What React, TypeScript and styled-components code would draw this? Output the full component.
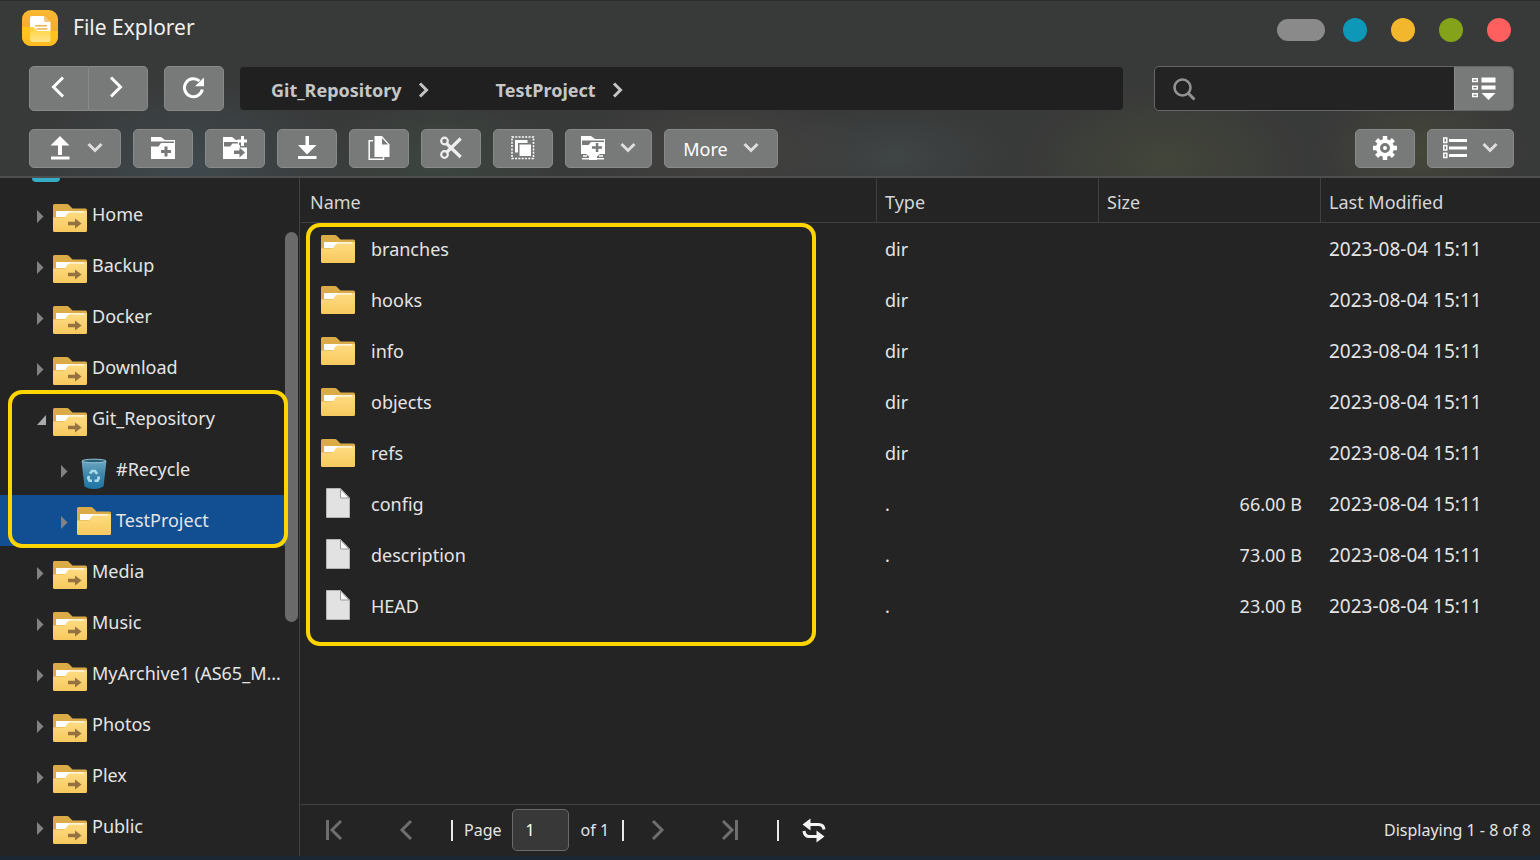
import React from "react";
import styled, { createGlobalStyle } from "styled-components";

const GlobalStyle = createGlobalStyle`
  *, *::before, *::after { box-sizing: border-box; }
  html, body, #root { height: 100%; }
  body {
    margin: 0;
    background: #1b2833;
    color: #e4e4e4;
    font-family: "Noto Sans", "Open Sans", sans-serif;
    font-size: 18px;
    line-height: 24px;
  }
  button, input { font: inherit; color: inherit; }
  button { cursor: pointer; }
`;

const GREY = "#787979";
const GOLD = "#ffd500";

/* ---------- window frame ---------- */

const Page = styled.div`
  height: 100%;
  padding-bottom: 4px;
`;

const Window = styled.div`
  display: flex;
  flex-direction: column;
  height: 100%;
  overflow: hidden;
  background: #242424;
  border-radius: 0 0 4px 4px;
`;

const Header = styled.header`
  display: flex;
  flex-direction: column;
  border-top: 1px solid #2b2c2c;
  border-bottom: 2px solid #4d4e4e;
  padding: 0 26px 8px 29px;
  background:
    radial-gradient(ellipse 170px 90px at 190px 165px, rgba(66, 80, 86, 0.7), transparent),
    radial-gradient(ellipse 130px 70px at 440px 160px, rgba(62, 76, 66, 0.7), transparent),
    radial-gradient(ellipse 150px 60px at 720px 150px, rgba(76, 72, 70, 0.7), transparent),
    radial-gradient(ellipse 120px 55px at 895px 155px, rgba(68, 76, 76, 0.6), transparent),
    radial-gradient(ellipse 150px 80px at 1165px 160px, rgba(70, 74, 58, 0.75), transparent),
    radial-gradient(ellipse 110px 70px at 1420px 150px, rgba(72, 74, 58, 0.8), transparent),
    #383939;
`;

const TitleBar = styled.div`
  display: flex;
  align-items: center;
  height: 54px;
  margin: 0 3px 11px -7px;
`;

const AppTitle = styled.h1`
  flex: 1;
  margin: 0 0 0 15px;
  padding-bottom: 3px;
  font-size: 21px;
  line-height: 28px;
  font-weight: 400;
  color: #f0f0f0;
`;

const WindowButtons = styled.div`
  display: flex;
  align-items: center;
  gap: 24px;
`;

const WindowButton = styled.button<{ $color: string }>`
  width: 24px;
  height: 24px;
  margin-top: 3px;
  padding: 0;
  border: 0;
  border-radius: 50%;
  background: ${(p) => p.$color};
`;

const PillButton = styled(WindowButton)`
  width: 48px;
  height: 22px;
  margin-right: -6px;
  border-radius: 11px;
`;

/* ---------- bars ---------- */

const AddressBar = styled.div`
  display: flex;
  align-items: center;
  height: 45px;
  margin-bottom: 18px;
`;

const Toolbar = styled.div`
  display: flex;
  gap: 12px;
`;

const Spacer = styled.div`
  flex: 1;
`;

const BarButton = styled.button<{ $width?: number }>`
  display: flex;
  align-items: center;
  justify-content: center;
  gap: 15px;
  flex: none;
  width: ${(p) => p.$width ?? 60}px;
  height: 39px;
  padding: 0 0 1px;
  border: 1px solid #888989;
  border-radius: 5px;
  background: ${GREY};
  color: #fff;
`;

const ButtonText = styled.span`
  padding-top: 2px;
`;

const TallButton = styled(BarButton)`
  height: 45px;
`;

const NavGroup = styled.div`
  display: flex;
  margin-right: 16px;

  ${TallButton}:first-child { border-radius: 5px 0 0 5px; }
  ${TallButton}:last-child { border-radius: 0 5px 5px 0; border-left: 0; width: 59px; }
`;

const Breadcrumb = styled.nav`
  display: flex;
  align-items: center;
  flex: 1;
  gap: 64px;
  height: 43px;
  margin: 0 31px 0 16px;
  padding: 2px 31px 0;
  border-radius: 4px;
  background: #202020;
`;

const Crumb = styled.a`
  display: flex;
  align-items: center;
  gap: 14px;
  color: #c6c6c6;
  font-weight: 700;
  text-decoration: none;
`;

const SearchBox = styled.form`
  display: flex;
  align-items: center;
  flex: none;
  width: 360px;
  height: 45px;
  padding-left: 17px;
  border: 1px solid #656666;
  border-radius: 5px;
  background: #232323;
  overflow: hidden;
`;

const SearchInput = styled.input`
  flex: 1;
  min-width: 0;
  height: 43px;
  padding: 0 12px;
  border: 0;
  outline: 0;
  background: transparent;
`;

const SearchButton = styled(TallButton)`
  width: 59px;
  border-width: 0 0 0 1px;
  border-radius: 0;
`;

/* ---------- body ---------- */

const Body = styled.div`
  display: flex;
  flex: 1;
  min-height: 0;
`;

const Sidebar = styled.aside`
  display: flex;
  flex: none;
  width: 300px;
  border-right: 1px solid #434343;
`;

const Tree = styled.ul`
  width: 285px;
  margin: 0;
  padding: 0;
  list-style: none;
  white-space: nowrap;
`;

const TreeTop = styled.li`
  height: 11px;
  padding-left: 32px;

  &::before {
    content: "";
    display: block;
    width: 28px;
    height: 4px;
    border-radius: 0 0 10px 10px;
    background: #35adc5;
  }
`;

const SubTree = styled.ul`
  margin: 0;
  padding: 0;
  list-style: none;
`;

const Branch = styled.li<{ $marked?: boolean }>`
  position: relative;
  ${(p) =>
    p.$marked &&
    `&::after {
      content: "";
      position: absolute;
      inset: -3px -3px -2px 8px;
      border: 4px solid ${GOLD};
      border-radius: 14px;
      pointer-events: none;
    }`}
`;

const TreeItem = styled.a<{ $depth: number; $selected?: boolean }>`
  display: flex;
  align-items: center;
  height: 51px;
  padding-left: ${(p) => 34 + p.$depth * 24}px;
  background: ${(p) => (p.$selected ? "#124e92" : "transparent")};
  color: inherit;
  text-decoration: none;

  span { padding: 0 0 2px 5px; }
  svg { flex: none; }
`;

const ScrollTrack = styled.div`
  width: 13px;
  padding-top: 54px;
`;

const ScrollThumb = styled.div`
  width: 13px;
  height: 390px;
  border-radius: 7px;
  background: #6a6a6a;
`;

const Main = styled.main`
  display: flex;
  flex-direction: column;
  flex: 1;
  min-width: 0;
  padding-left: 1px;
`;

const FileArea = styled.div`
  position: relative;
  flex: 1;
  min-height: 0;
`;

const Marker = styled.div`
  position: absolute;
  top: 45px;
  left: 5px;
  width: 510px;
  height: 423px;
  border: 4px solid ${GOLD};
  border-radius: 14px;
  pointer-events: none;
`;

const FileTable = styled.table`
  width: 100%;
  table-layout: fixed;
  border-collapse: separate;
  border-spacing: 0;

  tbody::before {
    content: "";
    display: block;
    height: 1px;
  }
`;

const HeadCell = styled.th<{ $width?: number }>`
  width: ${(p) => (p.$width ? `${p.$width}px` : "auto")};
  height: 45px;
  padding: 3px 0 0 9px;
  border-bottom: 1px solid #404040;
  text-align: left;
  font-weight: 400;
  color: #d6d6d6;

  & + & { padding-left: 8px; border-left: 1px solid #404040; }
`;

const Cell = styled.td<{ $right?: boolean; $large?: boolean }>`
  height: 51px;
  padding: ${(p) => (p.$right ? "0 18px 2px 0" : "0 0 2px 9px")};
  font-size: ${(p) => (p.$large ? 19 : 18)}px;
  text-align: ${(p) => (p.$right ? "right" : "left")};
`;

const FileName = styled.div`
  display: flex;
  align-items: center;
  gap: 16px;
  padding-left: 11px;
`;

/* ---------- footer ---------- */

const Footer = styled.footer`
  display: flex;
  align-items: center;
  height: 52px;
  padding: 0 9px 1px 17px;
  border-top: 1px solid #434343;
  font-size: 16px;
`;

const PagerButton = styled.button<{ $gap?: number }>`
  display: flex;
  margin-right: ${(p) => p.$gap ?? 0}px;
  padding: 0;
  border: 0;
  background: transparent;
`;

const Divider = styled.span<{ $gap: number }>`
  width: 2px;
  height: 21px;
  margin-right: ${(p) => p.$gap}px;
  background: #e8e8e8;
`;

const PageLabel = styled.label`
  display: flex;
  align-items: center;
  gap: 10px;
`;

const PageInput = styled.input`
  width: 57px;
  height: 42px;
  padding: 0 13px;
  border: 1px solid #6a6a6a;
  border-radius: 5px;
  background: #383838;
  color: #fff;
`;

const PageCount = styled.span`
  margin: 0 13px 0 12px;
`;

/* ---------- icons ---------- */

const Icon = ({ size = 24, children }: { size?: number; children: React.ReactNode }) => (
  <svg width={size} height={size} viewBox={`0 0 ${size} ${size}`} fill="none" aria-hidden="true">
    {children}
  </svg>
);

const Chevron = ({ d, color = "#fff", width = 3, size = 24 }: { d: string; color?: string; width?: number; size?: number }) => (
  <Icon size={size}>
    <path d={d} stroke={color} strokeWidth={width} />
  </Icon>
);

const DownChevron = () => <Chevron size={16} color="#dedede" d="M1.500 4 8 10.500 14.500 4" />;

const AppIcon = () => (
  <Icon size={36}>
    <defs>
      <linearGradient id="appTop" x1="0" y1="0" x2="0" y2="1">
        <stop offset="0" stopColor="#f9b832" />
        <stop offset="1" stopColor="#eea12d" />
      </linearGradient>
      <linearGradient id="appBottom" x1="0" y1="0" x2="0" y2="1">
        <stop offset="0" stopColor="#ffc61c" />
        <stop offset="1" stopColor="#fdbb22" />
      </linearGradient>
      <linearGradient id="appPocket" x1="0" y1="0" x2="0" y2="1">
        <stop offset="0" stopColor="#ffd035" />
        <stop offset="1" stopColor="#ffe68a" />
      </linearGradient>
    </defs>
    <rect width="36" height="36" rx="9" fill="url(#appTop)" />
    <path d="M0 17h11l4 4h21v6a9 9 0 0 1-9 9H9a9 9 0 0 1-9-9z" fill="url(#appBottom)" />
    <path d="M8 8a2 2 0 0 1 2-2h12l6.500 6v9.500H15l-4-4.500H8z" fill="#fff" />
    <path d="M22 6v4a2 2 0 0 0 2 2h4.500z" fill="#f3c272" />
    <path d="M13 15.700h12M14.500 19h11" stroke="#efb04a" strokeWidth="1.500" />
    <path d="M8 17h3l4 4h13.500v9a2 2 0 0 1-2 2H10a2 2 0 0 1-2-2z" fill="url(#appPocket)" />
  </Icon>
);

const RefreshIcon = () => (
  <Icon>
    <path d="M20.300 13.500A9 9 0 1 1 17.500 5" stroke="#fff" strokeWidth="3" />
    <path d="M22 1.500V10.300H13z" fill="#fff" />
  </Icon>
);

const SearchIcon = () => (
  <Icon>
    <circle cx="10.500" cy="10.500" r="8" stroke="#929292" strokeWidth="2.600" />
    <path d="M16.500 16.500 22.500 22.500" stroke="#929292" strokeWidth="3" />
  </Icon>
);

const FilterIcon = () => (
  <Icon>
    <path d="M.700 2.700h4.600v2.800H.700zM.700 10.200h4.600v2.800H.700zM.700 17.700h4.600v2.800H.700z" stroke="#fff" strokeWidth="1.400" />
    <path d="M9.500 1.500H23.500v5H9.500zM9.500 9.500H23.500v4H9.500zM9.500 17H23.500l-7 7z" fill="#fff" />
  </Icon>
);

const UploadIcon = () => (
  <Icon>
    <path d="M12 0 21.500 9.500H14V19h-4V9.500H2.500zM3 20.500h18.500v3H3z" fill="#fff" />
  </Icon>
);

const DownloadIcon = () => (
  <Icon>
    <path d="M10.500 0h3.500v9h7.500l-9.500 9.500L3 9h7.500zM3 20h18.500v3H3z" fill="#fff" />
  </Icon>
);

const NewFolderIcon = () => (
  <Icon>
    <path d="M0 1h10l4 3h10v19H0z" fill="#fff" />
    <path d="M0 5.500h23v1.500h-13l-2.500 3.500H0z" fill={GREY} />
    <path d="M13.500 10.500h3v3.500H20v3h-3.500v3.500h-3V17H10v-3h3.500z" fill={GREY} />
  </Icon>
);

const NewShareIcon = () => (
  <Icon>
    <path d="M0 1h9l4 3h3v5h1v2.500h7V23H0z" fill="#fff" />
    <path d="M1 6h14v1.500H9.500L7 10.500H1z" fill={GREY} />
    <path d="M18 0h3v3.500h3.500v3H21V10h-3V6.500h-3.500v-3H18z" fill="#fff" />
    <path d="M11 14.500h5.500V11.500l5.500 5-5.500 5v-3.500H11z" fill={GREY} />
  </Icon>
);

const CopyIcon = () => (
  <Icon>
    <path d="M6 4.700H2.200V23.200H16.500V21" stroke="#fff" strokeWidth="1.500" />
    <path d="M7.500 0H15l7.500 8.500V21h-15z" fill="#fff" />
    <path d="M15 2v6.500h6z" fill={GREY} />
  </Icon>
);

const CutIcon = () => (
  <Icon>
    <g stroke="#efefef" strokeWidth="2.200">
      <circle cx="5.500" cy="5" r="3.300" />
      <circle cx="5.500" cy="18.500" r="3.300" />
    </g>
    <path d="M7.500 7.500 21.700 21M7.500 16.500 21.700 2.500" stroke="#efefef" strokeWidth="3.200" />
  </Icon>
);

const SelectAllIcon = () => (
  <Icon>
    <rect x="1" y="1" width="21.500" height="21.500" stroke="#fff" strokeWidth="1.500" strokeDasharray="2 1.300" />
    <path d="M4 4h12.500v3H7v9.500H4z" fill="#fff" />
    <path d="M8.500 8.500h11.500v11.500H8.500z" fill="#fff" />
  </Icon>
);

const RemoteFolderIcon = () => (
  <Icon>
    <path d="M0 0h10l4 3h10v15H0z" fill="#fff" />
    <path d="M1 4.500h22V6H10L7.500 9H1z" fill={GREY} />
    <path d="M14.800 7h2.500v3.300H21v2.500h-3.700V16h-2.500v-3.200H11v-2.500h3.800z" fill={GREY} />
    <path d="M2 20h4M18 20H22M1 22.700h7.500M16 22.700h7" stroke="#fff" strokeWidth="1.500" />
    <path d="M4 17h16l-4 3.500V24H8v-3.500z" fill="#fff" />
  </Icon>
);

const GearIcon = () => (
  <Icon>
    <g stroke="#fff" strokeWidth="4.400">
      <path d="M12 0v5M12 19v5M0 12h5M19 12h5M3.600 3.600l3.600 3.600M16.800 16.800l3.600 3.600M3.600 20.400l3.600-3.600M16.800 7.200l3.600-3.600" />
    </g>
    <circle cx="12" cy="12" r="7" stroke="#fff" strokeWidth="4" />
    <circle cx="12" cy="12" r="2" fill="#fff" />
  </Icon>
);

const ListIcon = () => (
  <Icon>
    <path d="M.800 2h3v4.400h-3zM.800 9.600h3V14h-3zM.800 17.200h3v4.400h-3z" stroke="#fff" strokeWidth="1.500" />
    <path d="M6 4.500h18M6 12h18M6 19.500h18" stroke="#fff" strokeWidth="3" />
  </Icon>
);

const SyncIcon = () => (
  <Icon size={26}>
    <path d="M8 7.500h9.500q5 0 5.500 5M17 19.500H8.500q-5 0-5.500-5.500" stroke="#f4f4f4" strokeWidth="3" />
    <path d="M9.500 1.500v12L1.500 7.500zM15.500 13.500v12L23.500 19.500z" fill="#f4f4f4" />
  </Icon>
);

const Expander = ({ open }: { open?: boolean }) => (
  <svg width="19" height="16" viewBox="0 0 19 16" aria-hidden="true">
    {open ? <path d="M3 14h9V4z" fill="#a9abae" /> : <path d="M3 3v13l6.500-6.500z" fill="#828282" />}
  </svg>
);

const FolderIcon = ({ shared }: { shared?: boolean }) => (
  <svg width="34" height="40" viewBox="0 0 34 40" aria-hidden="true">
    <defs>
      <linearGradient id="folderFront" x1="0" y1="0" x2="0" y2="1">
        <stop offset="0" stopColor="#ffdc83" />
        <stop offset="1" stopColor="#f7c95e" />
      </linearGradient>
    </defs>
    <g transform={shared ? "translate(0 3)" : undefined}>
      <path d="M0 7.500Q0 6 1.500 6H14q1 0 2 1l3.500 3.500H32.500Q34 10.500 34 12v21H0z" fill="#dbab48" />
      <path d="M3 13h28v3H3z" fill="#fff3d6" />
      <path d="M3 13h14l-4 6H3z" fill="#fff" />
      <path d="M0 19.500h10.500q1.500 0 2.500-1.500l1.200-2q.800-1.200 2-1.200H31V13H34V32.500q0 1.500-1.500 1.500h-31Q0 34 0 32.500z" fill="url(#folderFront)" />
      {shared && <path d="M15 23.700h7V20.500l6.500 5-6.500 5v-3.200h-7z" fill="#957240" />}
    </g>
  </svg>
);

const FileIcon = () => (
  <svg width="34" height="40" viewBox="0 0 34 40" aria-hidden="true">
    <path d="M5.500 4.500H19.500L28.500 14V33.500h-23z" fill="#e2e2e2" stroke="#b4b4b4" />
    <path d="M19.500 5v9H28z" fill="#fafafa" stroke="#999" />
  </svg>
);

const RecycleIcon = () => (
  <svg width="34" height="40" viewBox="0 0 34 40" aria-hidden="true">
    <defs>
      <linearGradient id="bin" x1="0" y1="0" x2="0" y2="1">
        <stop offset="0" stopColor="#6ba5c0" />
        <stop offset="0.500" stopColor="#3f86ab" />
        <stop offset="1" stopColor="#1b75a6" />
      </linearGradient>
    </defs>
    <path d="M4.500 11 7.500 36.500q4 2.500 9.500 2.500t9.500-2.500L29.500 11z" fill="url(#bin)" />
    <ellipse cx="17" cy="11" rx="12" ry="1.800" fill="#2f5f77" stroke="#8fc3d6" strokeWidth="1" />
    <g transform="translate(16.500 26)" stroke="#a9dbea" strokeWidth="2.600" fill="none">
      <path d="M-3.500-2.500-1.500-5H1.500L3.700-2" />
      <path d="M4.600.500 5.300 2.200 4 4.800H1" />
      <path d="M-1.500 4.800H-4L-5.300 2.200-4.500 0" />
    </g>
  </svg>
);

/* ---------- data ---------- */

type Node = { name: string; kind?: "shared" | "bin" | "folder"; children?: Node[]; selected?: boolean };

const tree: Node[] = [
  { name: "Home" },
  { name: "Backup" },
  { name: "Docker" },
  { name: "Download" },
  {
    name: "Git_Repository",
    children: [
      { name: "#Recycle", kind: "bin" },
      { name: "TestProject", kind: "folder", selected: true },
    ],
  },
  { name: "Media" },
  { name: "Music" },
  { name: "MyArchive1 (AS65_M..." },
  { name: "Photos" },
  { name: "Plex" },
  { name: "Public" },
];

const files = [
  { name: "branches", type: "dir", size: "" },
  { name: "hooks", type: "dir", size: "" },
  { name: "info", type: "dir", size: "" },
  { name: "objects", type: "dir", size: "" },
  { name: "refs", type: "dir", size: "" },
  { name: "config", type: ".", size: "66.00 B" },
  { name: "description", type: ".", size: "73.00 B" },
  { name: "HEAD", type: ".", size: "23.00 B" },
];

const TreeNode = ({ node, depth = 0 }: { node: Node; depth?: number }) => (
  <Branch $marked={!!node.children}>
    <TreeItem href="#" $depth={depth} $selected={node.selected}>
      <Expander open={!!node.children} />
      {node.kind === "bin" ? <RecycleIcon /> : <FolderIcon shared={node.kind !== "folder"} />}
      <span>{node.name}</span>
    </TreeItem>
    {node.children && (
      <SubTree>
        {node.children.map((child) => (
          <TreeNode key={child.name} node={child} depth={depth + 1} />
        ))}
      </SubTree>
    )}
  </Branch>
);

export default function App() {
  return (
    <Page>
      <GlobalStyle />
      <Window>
        <Header>
          <TitleBar>
            <AppIcon />
            <AppTitle>File Explorer</AppTitle>
            <WindowButtons>
              <PillButton $color="#8a8a8a" aria-label="Help" />
              <WindowButton $color="#0c98b6" aria-label="Pin" />
              <WindowButton $color="#f3b72e" aria-label="Minimize" />
              <WindowButton $color="#84a31a" aria-label="Maximize" />
              <WindowButton $color="#ff5f5f" aria-label="Close" />
            </WindowButtons>
          </TitleBar>

          <AddressBar>
            <NavGroup>
              <TallButton aria-label="Back">
                <Chevron d="M16 1.500 6.500 11 16 20.500" />
              </TallButton>
              <TallButton aria-label="Forward">
                <Chevron d="M5 1.500 14.500 11 5 20.500" />
              </TallButton>
            </NavGroup>
            <TallButton aria-label="Refresh">
              <RefreshIcon />
            </TallButton>
            <Breadcrumb aria-label="Path">
              {["Git_Repository", "TestProject"].map((crumb) => (
                <Crumb key={crumb} href="#">
                  {crumb}
                  <Chevron size={16} color="#c4c4c4" d="M4 1.500 10.500 8 4 14.500" />
                </Crumb>
              ))}
            </Breadcrumb>
            <SearchBox role="search">
              <SearchIcon />
              <SearchInput type="text" aria-label="Search" />
              <SearchButton type="button" aria-label="Search options">
                <FilterIcon />
              </SearchButton>
            </SearchBox>
          </AddressBar>

          <Toolbar>
            <BarButton $width={92} aria-label="Upload">
              <UploadIcon />
              <DownChevron />
            </BarButton>
            <BarButton aria-label="New folder">
              <NewFolderIcon />
            </BarButton>
            <BarButton aria-label="New shared folder">
              <NewShareIcon />
            </BarButton>
            <BarButton aria-label="Download">
              <DownloadIcon />
            </BarButton>
            <BarButton aria-label="Copy">
              <CopyIcon />
            </BarButton>
            <BarButton aria-label="Cut">
              <CutIcon />
            </BarButton>
            <BarButton aria-label="Select all">
              <SelectAllIcon />
            </BarButton>
            <BarButton $width={87} aria-label="Remote folder">
              <RemoteFolderIcon />
              <DownChevron />
            </BarButton>
            <BarButton $width={114}>
              <ButtonText>More</ButtonText>
              <DownChevron />
            </BarButton>
            <Spacer />
            <BarButton aria-label="Settings">
              <GearIcon />
            </BarButton>
            <BarButton $width={87} aria-label="View">
              <ListIcon />
              <DownChevron />
            </BarButton>
          </Toolbar>
        </Header>

        <Body>
          <Sidebar>
            <Tree>
              <TreeTop />
              {tree.map((node) => (
                <TreeNode key={node.name} node={node} />
              ))}
            </Tree>
            <ScrollTrack>
              <ScrollThumb />
            </ScrollTrack>
          </Sidebar>

          <Main>
            <FileArea>
              <FileTable>
                <thead>
                  <tr>
                    <HeadCell>Name</HeadCell>
                    <HeadCell $width={222}>Type</HeadCell>
                    <HeadCell $width={222}>Size</HeadCell>
                    <HeadCell $width={220}>Last Modified</HeadCell>
                  </tr>
                </thead>
                <tbody>
                  {files.map((file) => (
                    <tr key={file.name}>
                      <Cell>
                        <FileName>
                          {file.type === "dir" ? <FolderIcon /> : <FileIcon />}
                          {file.name}
                        </FileName>
                      </Cell>
                      <Cell>{file.type}</Cell>
                      <Cell $right>{file.size}</Cell>
                      <Cell $large>2023-08-04 15:11</Cell>
                    </tr>
                  ))}
                </tbody>
              </FileTable>
              <Marker />
            </FileArea>

            <Footer>
              <PagerButton $gap={49} aria-label="First page">
                <Chevron color="#6e6e6e" d="M9.500 2v20M23 3 14 12 23 21" />
              </PagerButton>
              <PagerButton $gap={36} aria-label="Previous page">
                <Chevron color="#6e6e6e" d="M20 3 11 12 20 21" />
              </PagerButton>
              <Divider $gap={11} />
              <PageLabel>
                Page
                <PageInput type="text" defaultValue="1" />
              </PageLabel>
              <PageCount>of 1</PageCount>
              <Divider $gap={22} />
              <PagerButton $gap={49} aria-label="Next page">
                <Chevron color="#6e6e6e" d="M7 3 16 12 7 21" />
              </PagerButton>
              <PagerButton $gap={34} aria-label="Last page">
                <Chevron color="#6e6e6e" d="M4 3 13 12 4 21M17.500 2v20" />
              </PagerButton>
              <Divider $gap={22} />
              <PagerButton aria-label="Reload">
                <SyncIcon />
              </PagerButton>
              <Spacer />
              Displaying 1 - 8 of 8
            </Footer>
          </Main>
        </Body>
      </Window>
    </Page>
  );
}
